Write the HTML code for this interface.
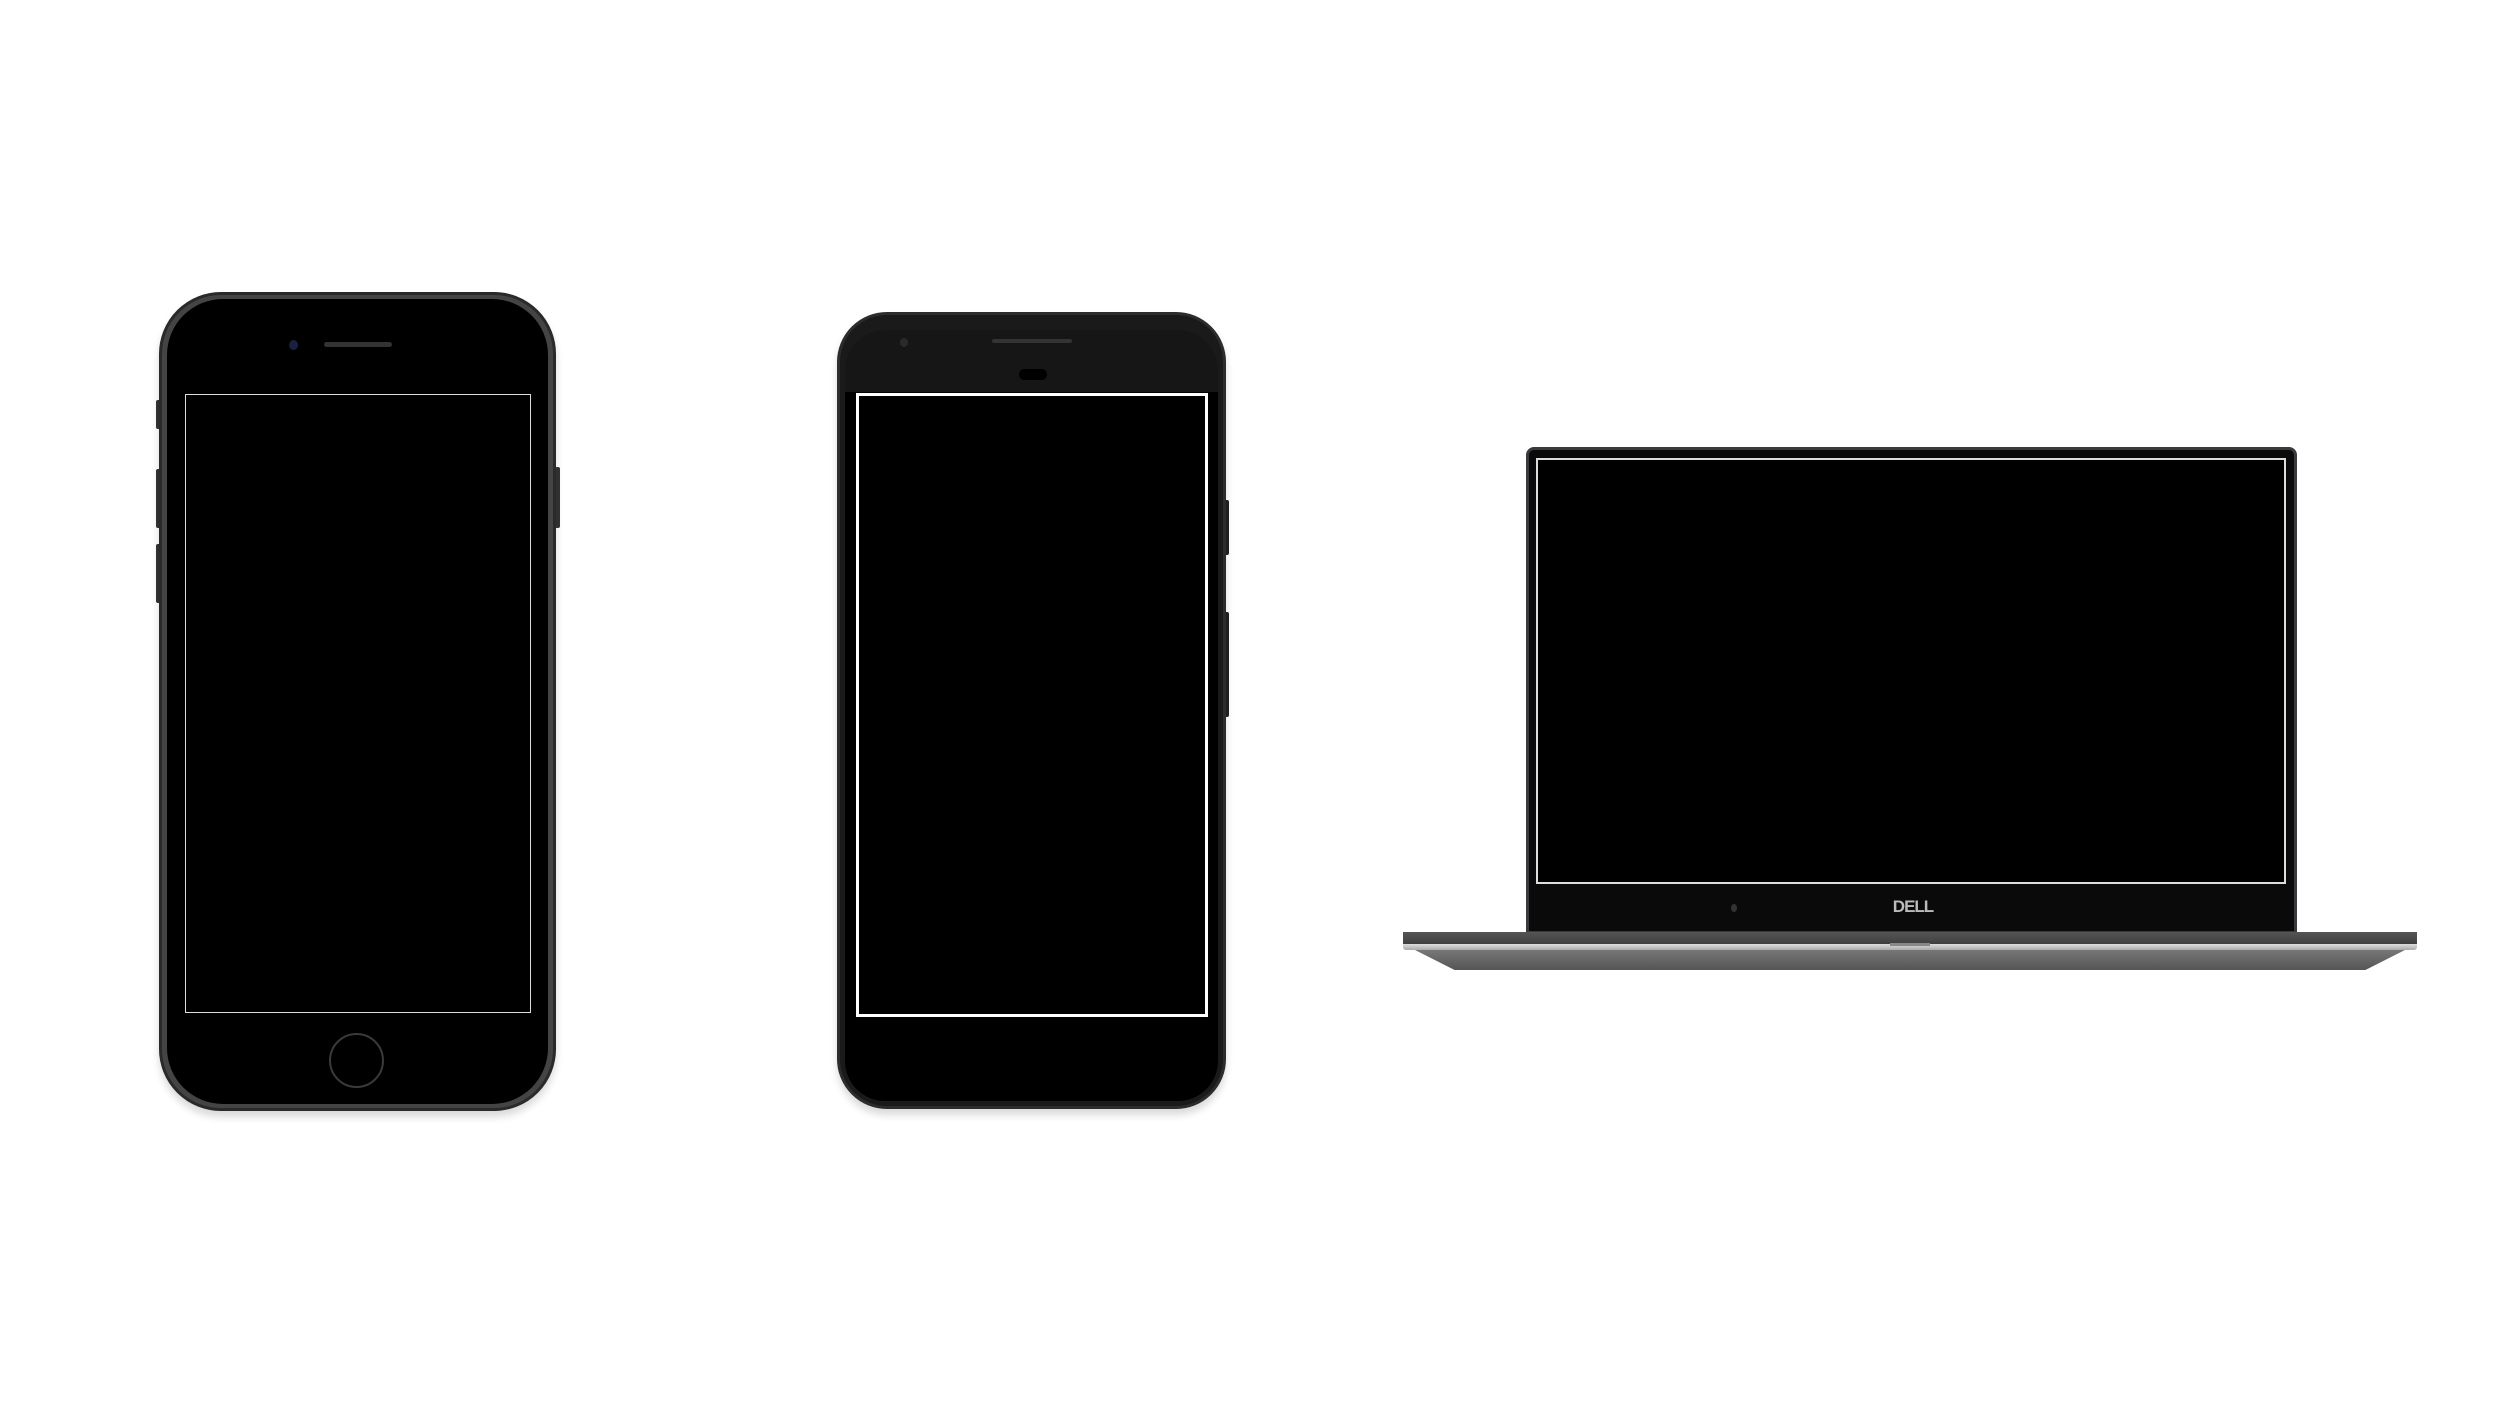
<!DOCTYPE html>
<html><head><style>
body{margin:0;width:2500px;height:1406px;background:#fff;position:relative;overflow:hidden;font-family:"Liberation Sans",sans-serif}
div{position:absolute;box-sizing:border-box}
</style></head><body>
<!-- iPhone -->
<div style="left:156px;top:400px;width:5px;height:29px;background:#333;border-radius:2px"></div>
<div style="left:156px;top:469px;width:5px;height:59px;background:#333;border-radius:2px"></div>
<div style="left:156px;top:544px;width:5px;height:59px;background:#333;border-radius:2px"></div>
<div style="left:555px;top:467px;width:5px;height:61px;background:#333;border-radius:2px"></div>
<div style="left:159px;top:292px;width:397px;height:819px;border-radius:62px;background:#444;border:3px solid #2a2a2a;box-shadow:0 6px 8px rgba(0,0,0,.15)"></div>
<div style="left:167px;top:299px;width:381px;height:805px;border-radius:56px;background:#000"></div>
<div style="left:185px;top:394px;width:346px;height:619px;border:1.5px solid #ddd;background:#000"></div>
<div style="left:324px;top:342px;width:68px;height:5px;border-radius:3px;background:#333"></div>
<div style="left:289px;top:340px;width:9px;height:10px;border-radius:50%;background:#1c2040"></div>
<div style="left:329px;top:1033px;width:55px;height:55px;border-radius:50%;border:2.5px solid #3a3a3a"></div>
<!-- Pixel -->
<div style="left:1224px;top:500px;width:5px;height:55px;background:#222;border-radius:2px"></div>
<div style="left:1224px;top:612px;width:5px;height:105px;background:#222;border-radius:2px"></div>
<div style="left:837px;top:312px;width:389px;height:797px;border-radius:50px;background:#1a1a1a;border:3px solid #2c2c2c;box-shadow:0 6px 8px rgba(0,0,0,.15)"></div>
<div style="left:845px;top:330px;width:373px;height:771px;border-radius:40px;background:linear-gradient(#161616 0,#161616 62px,#000 62px)"></div>
<div style="left:856px;top:393px;width:352px;height:624px;border:3px solid #fff;background:#000"></div>
<div style="left:992px;top:339px;width:80px;height:4px;border-radius:2px;background:#333"></div>
<div style="left:1019px;top:369px;width:28px;height:11px;border-radius:6px;background:#000"></div>
<div style="left:900px;top:338px;width:8px;height:9px;border-radius:50%;background:#2a2a2a"></div>
<!-- Laptop -->
<div style="left:1526px;top:447px;width:771px;height:487px;border-radius:8px 8px 0 0;background:#0a0a0a;border:3px solid #3a3a3e"></div>
<div style="left:1536px;top:458px;width:750px;height:426px;border:2px solid #ddd;background:#000"></div>
<div style="left:1731px;top:904px;width:6px;height:8px;border-radius:50%;background:#333"></div>
<div style="left:1874px;top:897px;width:78px;height:22px;color:#bbb;font-weight:bold;font-size:17px;text-align:center;letter-spacing:-1px">DELL</div>
<div style="left:1403px;top:932px;width:1014px;height:14px;background:linear-gradient(#555,#3c3c3c)"></div>
<div style="left:1403px;top:944px;width:1014px;height:6px;background:linear-gradient(#ddd,#aaa);border-radius:0 0 3px 3px"></div>
<div style="left:1415px;top:950px;width:990px;height:20px;background:linear-gradient(#777,#555);clip-path:polygon(0 0,100% 0,96% 100%,4% 100%)"></div>
<div style="left:1890px;top:943px;width:40px;height:3px;background:#888"></div>
</body></html>
